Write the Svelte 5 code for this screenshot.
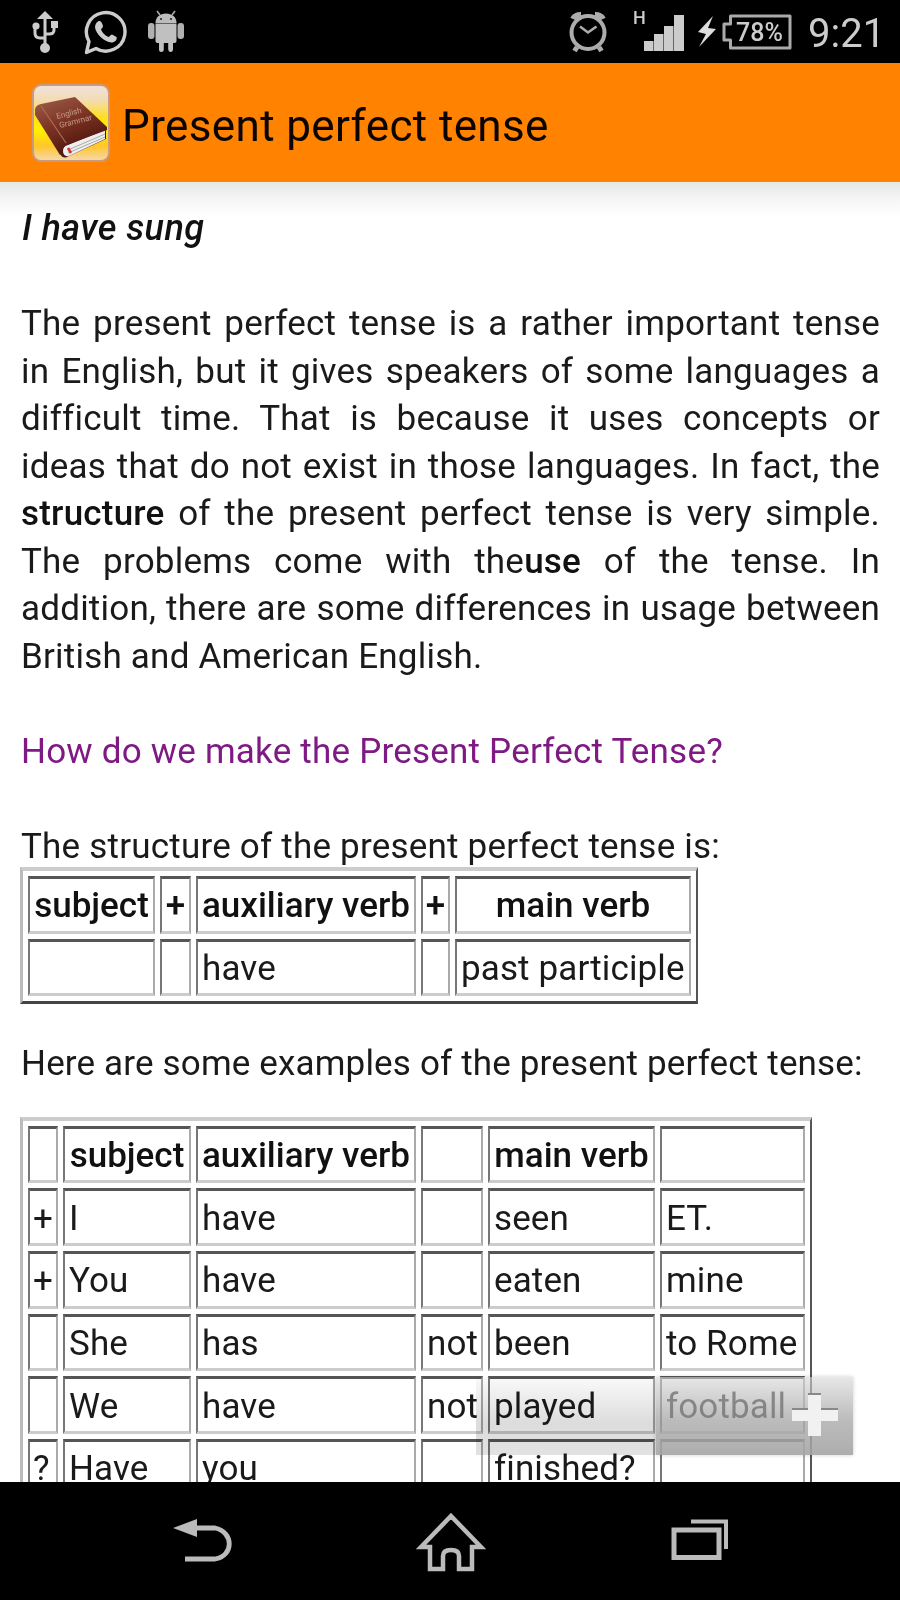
<script>
	const structure = [
		['', '', 'have', '', 'past participle']
	];

	const examples = [
		['+', 'I', 'have', '', 'seen', 'ET.'],
		['+', 'You', 'have', '', 'eaten', 'mine'],
		['', 'She', 'has', 'not', 'been', 'to Rome'],
		['', 'We', 'have', 'not', 'played', 'football'],
		['?', 'Have', 'you', '', 'finished?', '']
	];
</script>

<div class="screen">
	<div class="status">
		<svg class="usb" width="26" height="44" viewBox="0 0 26 44">
			<path d="M13 6V38M3 15V23Q3 28 8 28H13M22 14V20Q22 24 17 24H13" fill="none" stroke="#ccc" stroke-width="3" />
			<path d="M5 9L13 1L21 9Z" fill="#ccc" />
			<circle cx="13" cy="38" r="5" fill="#ccc" />
			<circle cx="4" cy="16" r="3.600" fill="#ccc" />
			<rect x="19" y="11" width="7" height="7" fill="#ccc" />
		</svg>
		<svg class="whatsapp" width="44" height="46" viewBox="0 0 44 46">
			<path d="M2.500 43.500L5 32.500A19.300 19.300 0 1 1 12 39.500Z" fill="none" stroke="#ccc" stroke-width="3.400" stroke-linejoin="round" />
			<path d="M14 12.500C16 11 18 13 19 17C19 19 17 19.500 17 20.500C18.500 24 21 26.500 24.500 28C26 28 26 25.500 28 25.500L32.500 28C33.500 31 30.500 33.500 27.500 33.500C20 33 12 25 11 18.500C11 16 12 13.500 14 12.500Z" fill="#ccc" />
		</svg>
		<svg class="android" width="38" height="44" viewBox="0 0 38 44">
			<path d="M10 1L13 5M28 1L25 5" stroke="#aaa" stroke-width="1.600" />
			<path d="M8.500 13C8.500 7 13 3.500 19 3.500S29.500 7 29.500 13Z" fill="#bbb" />
			<path d="M8.500 13.500H29.500V31Q29.500 33 27.500 33H26V39Q26 42 23.700 42T21.200 39V33H16.800V39Q16.800 42 14.300 42T12 39V33H10.500Q8.500 33 8.500 31Z" fill="#c0c0c0" />
			<rect x="1" y="13" width="6.500" height="16" rx="3" fill="#b0b0b0" />
			<rect x="30.500" y="13" width="6.500" height="16" rx="3" fill="#b0b0b0" />
			<circle cx="14" cy="9" r="1.100" fill="#222" />
			<circle cx="24" cy="9" r="1.100" fill="#222" />
		</svg>

		<svg class="alarm" width="40" height="42" viewBox="0 0 40 42">
			<g fill="none" stroke="#acacac">
				<circle cx="20" cy="21.500" r="16.500" stroke-width="4" />
				<path d="M12 15.500L20 21.500L28.500 15.500" stroke-width="2.600" />
				<path d="M5 8Q7 4 13 4M35 8Q33 4 27 4" stroke-width="6" />
				<path d="M9 36L6.500 40M31 36L33.500 40" stroke-width="5" />
			</g>
		</svg>
		<div class="signal">
			<span>H</span>
			<svg width="42" height="36" viewBox="0 0 42 36">
				<path d="M0 26H9.500V36H0ZM10 19H19.500V36H10ZM20 11H29.500V36H20ZM30 0H40V36H30Z" fill="#ccc" />
			</svg>
		</div>
		<svg class="bolt" width="20" height="32" viewBox="0 0 20 32">
			<path d="M16 0L1 16L9 18L2 31L19 13L11 12Z" fill="#ddd" />
		</svg>
		<div class="battery">
			<svg width="70" height="36" viewBox="0 0 70 36">
				<path d="M8.500 2H68V34H8.500V26H2V10H8.500Z" fill="none" stroke="#aaa" stroke-width="3" stroke-linejoin="round" />
			</svg>
			<span>78%</span>
		</div>
		<span class="clock">9:21</span>
	</div>

	<div class="bar">
		<svg width="78" height="78" viewBox="0 0 78 78">
			<defs>
				<linearGradient id="sky" x1="0" y1="0" x2="0" y2="1">
					<stop offset="0" stop-color="#efe2dc" />
					<stop offset="0.200" stop-color="#f3dcb4" />
					<stop offset="0.420" stop-color="#ffdf20" />
					<stop offset="0.600" stop-color="#fff000" />
					<stop offset="0.800" stop-color="#ffc62a" />
					<stop offset="1" stop-color="#f6d9b0" />
				</linearGradient>
				<linearGradient id="cover" x1="0" y1="0" x2="0.500" y2="1">
					<stop offset="0" stop-color="#a0604c" />
					<stop offset="0.500" stop-color="#7c3424" />
					<stop offset="1" stop-color="#4c140c" />
				</linearGradient>
			</defs>
			<rect x="1" y="1" width="76" height="76" rx="8" fill="url(#sky)" stroke="#c99a80" stroke-width="2" />
			<path d="M3 26L28 70Q31 75 35 73L74 55V44L36 59Z" fill="#4e1a12" />
			<path d="M31 67Q31 62 36 61L73 46V55L37 72Q31 73 31 67Z" fill="#eee" />
			<path d="M36 66L73 50M36 69L73 53" stroke="#aaa" stroke-width="1" />
			<path d="M3 25Q4 21 9 20L43 13L75 43V46L37 60Q30 62 28 71L3 31Z" fill="url(#cover)" />
			<path d="M9 22L34 59" stroke="#b06a55" stroke-width="1.200" />
			<text x="25" y="35" transform="rotate(-14 25 35)">English</text>
			<text x="28" y="44" transform="rotate(-14 28 44)">Grammar</text>
			<path d="M36 64L39 69" stroke="#c33" stroke-width="2.500" />
		</svg>
		<h1>Present perfect tense</h1>
	</div>

	<div class="content">
		<p class="lead">I have sung</p>
		<p class="intro">
			The present perfect tense is a rather important tense in English, but it gives speakers of some languages a difficult time. That is because it uses concepts or ideas that do not exist in those languages. In fact, the <b>structure</b> of the present perfect tense is very simple. The problems come with the<b>use</b> of the tense. In addition, there are some differences in usage between British and American English.
		</p>
		<p class="question">How do we make the Present Perfect Tense?</p>
		<p class="caption">The structure of the present perfect tense is:</p>

		<table class="structure">
			<colgroup>
				<col style:width="127px" /><col style:width="31px" /><col style:width="220px" /><col style:width="29px" /><col style:width="236px" />
			</colgroup>
			<thead>
				<tr><th>subject</th><th>+</th><th>auxiliary verb</th><th>+</th><th>main verb</th></tr>
			</thead>
			<tbody>
				{#each structure as row}
					<tr>{#each row as cell}<td>{cell}</td>{/each}</tr>
				{/each}
			</tbody>
		</table>

		<p class="more">Here are some examples of the present perfect tense:</p>

		<table class="examples">
			<colgroup>
				<col style:width="30px" /><col style:width="128px" /><col style:width="220px" /><col style:width="62px" /><col style:width="167px" /><col style:width="145px" />
			</colgroup>
			<thead>
				<tr><th></th><th>subject</th><th>auxiliary verb</th><th></th><th>main verb</th><th></th></tr>
			</thead>
			<tbody>
				{#each examples as row}
					<tr>{#each row as cell}<td>{cell}</td>{/each}</tr>
				{/each}
			</tbody>
		</table>

		<div class="zoom">
			<div class="out"></div>
			<div class="in">
				<svg width="48" height="46" viewBox="0 0 48 46">
					<path d="M17 2H30V17H47V29H30V44H17V29H1V17H17Z" fill="#f1f1f1" />
					<path d="M17 2H30M1 17H17M30 17H47" stroke="#888" stroke-width="2" />
				</svg>
			</div>
		</div>
	</div>

	<div class="nav">
		<svg width="60" height="60" viewBox="0 0 60 60">
			<path d="M20 16H43C62 20 62 44 43 47H13" fill="none" stroke="#bbb" stroke-width="4.800" />
			<path d="M1 16L25 7V25Z" fill="#bbb" />
		</svg>
		<svg width="70" height="60" viewBox="0 0 70 60">
			<path d="M35 4L65 35H56V57H43V44Q43 38 35 38T27 44V57H14V35H5Z" fill="none" stroke="#bbb" stroke-width="4.500" />
		</svg>
		<svg width="60" height="60" viewBox="0 0 60 60">
			<path d="M4 18H49V45.500H4Z" fill="none" stroke="#bbb" stroke-width="5" />
			<path d="M21 9.500H56V37" fill="none" stroke="#bbb" stroke-width="4" />
		</svg>
	</div>
</div>

<style>
	:global(body) {
		margin: 0;
		background: #fff;
	}
	.screen {
		width: 900px;
		height: 1600px;
		overflow: hidden;
		display: flex;
		flex-direction: column;
		background: #fff;
		color: #1a1a1a;
		font-family: Roboto, 'Liberation Sans', sans-serif;
	}
	.status {
		height: 63px;
		flex: none;
		display: flex;
		align-items: center;
		background: #000;
		color: #ccc;
	}
	.usb {
		margin-left: 32px;
	}
	.whatsapp {
		margin-left: 26px;
	}
	.android {
		margin-left: 19px;
	}
	.alarm {
		margin-left: auto;
		margin-right: 25px;
	}
	.signal {
		display: flex;
		align-items: flex-start;
		height: 42px;
	}
	.signal span {
		font-size: 18px;
		line-height: 13px;
		font-weight: 500;
		width: 11px;
	}
	.signal svg {
		margin-top: 4px;
	}
	.bolt {
		margin-left: 11px;
	}
	.battery {
		position: relative;
		display: flex;
		margin-left: 5px;
	}
	.battery span {
		position: absolute;
		left: 14px;
		top: 5px;
		font-size: 25px;
		line-height: 27px;
		font-weight: 500;
	}
	.clock {
		font-size: 40px;
		width: 73px;
		margin: 4px 19px 0 16px;
	}
	.bar {
		height: 119px;
		flex: none;
		display: flex;
		align-items: center;
		padding-left: 32px;
		background: #ff8200;
	}
	.bar svg {
		margin-top: 1px;
	}
	.bar text {
		font-size: 8px;
		fill: #c79a88;
	}
	h1 {
		margin: 6px 0 0 12px;
		font-size: 44px;
		font-weight: 400;
		letter-spacing: 0.37px;
		color: #0a0500;
	}
	.content {
		position: relative;
		flex: 1;
		min-height: 0;
		overflow: hidden;
		box-sizing: border-box;
		padding: 23px 20px 0;
		font-size: 35px;
		line-height: 47.5px;
		letter-spacing: 0.21px;
		background: linear-gradient(#e4e8e5, #f6f6f6 18px, #fff 36px) no-repeat 0 0 / 100% 36px;
	}
	p {
		margin: 0 0 47.5px 1px;
	}
	b,
	th {
		font-weight: 500;
		color: #111;
	}
	.lead {
		margin-left: 2px;
		font-size: 36px;
		font-style: italic;
		font-weight: 500;
		letter-spacing: 0.4px;
		color: #111;
	}
	.intro {
		text-align: justify;
	}
	.question {
		color: #7f1a85;
	}
	.caption {
		margin-bottom: -3px;
	}
	.more {
		margin: 36px 0 29px 1px;
		letter-spacing: 0.16px;
	}
	table {
		table-layout: fixed;
		border-spacing: 5px;
		border-style: solid;
		border-width: 4px 2px 3px 3px;
		border-color: #ccc #555 #444 #bbb;
		box-sizing: border-box;
	}
	.structure {
		width: 677px;
	}
	.examples {
		width: 792px;
	}
	th,
	td {
		box-sizing: border-box;
		height: 57.65px;
		padding: 3px 4px 0;
		line-height: 46px;
		letter-spacing: 0.12px;
		border-style: solid;
		border-width: 3px 2px 3px 2px;
		border-color: #555 #aaa #ccc #777;
		white-space: nowrap;
	}
	td:first-child {
		padding-left: 3px;
	}
	th {
		padding: 3px 0 0;
		letter-spacing: 0;
	}
	.zoom {
		position: absolute;
		left: 476px;
		top: 1195px;
		width: 377px;
		height: 78px;
		display: flex;
	}
	/* multiply keeps the table text dark under the disabled half */
	.out {
		width: 180px;
		background: linear-gradient(#fafafa, #dcdcdc 60%, #e2e2e2);
		mix-blend-mode: multiply;
	}
	.in {
		flex: 1;
		display: flex;
		justify-content: flex-end;
		align-items: flex-start;
		padding: 15px 14px 0 0;
		background: linear-gradient(rgba(215, 215, 215, 0.6), rgba(165, 165, 165, 0.75) 55%, rgba(165, 165, 165, 0.9));
		box-shadow: 0 0 4px rgba(0, 0, 0, 0.2);
	}
	.nav {
		height: 118px;
		flex: none;
		display: flex;
		justify-content: space-between;
		align-items: center;
		box-sizing: border-box;
		padding: 2px 170px 0 172px;
		background: #000;
	}
</style>
